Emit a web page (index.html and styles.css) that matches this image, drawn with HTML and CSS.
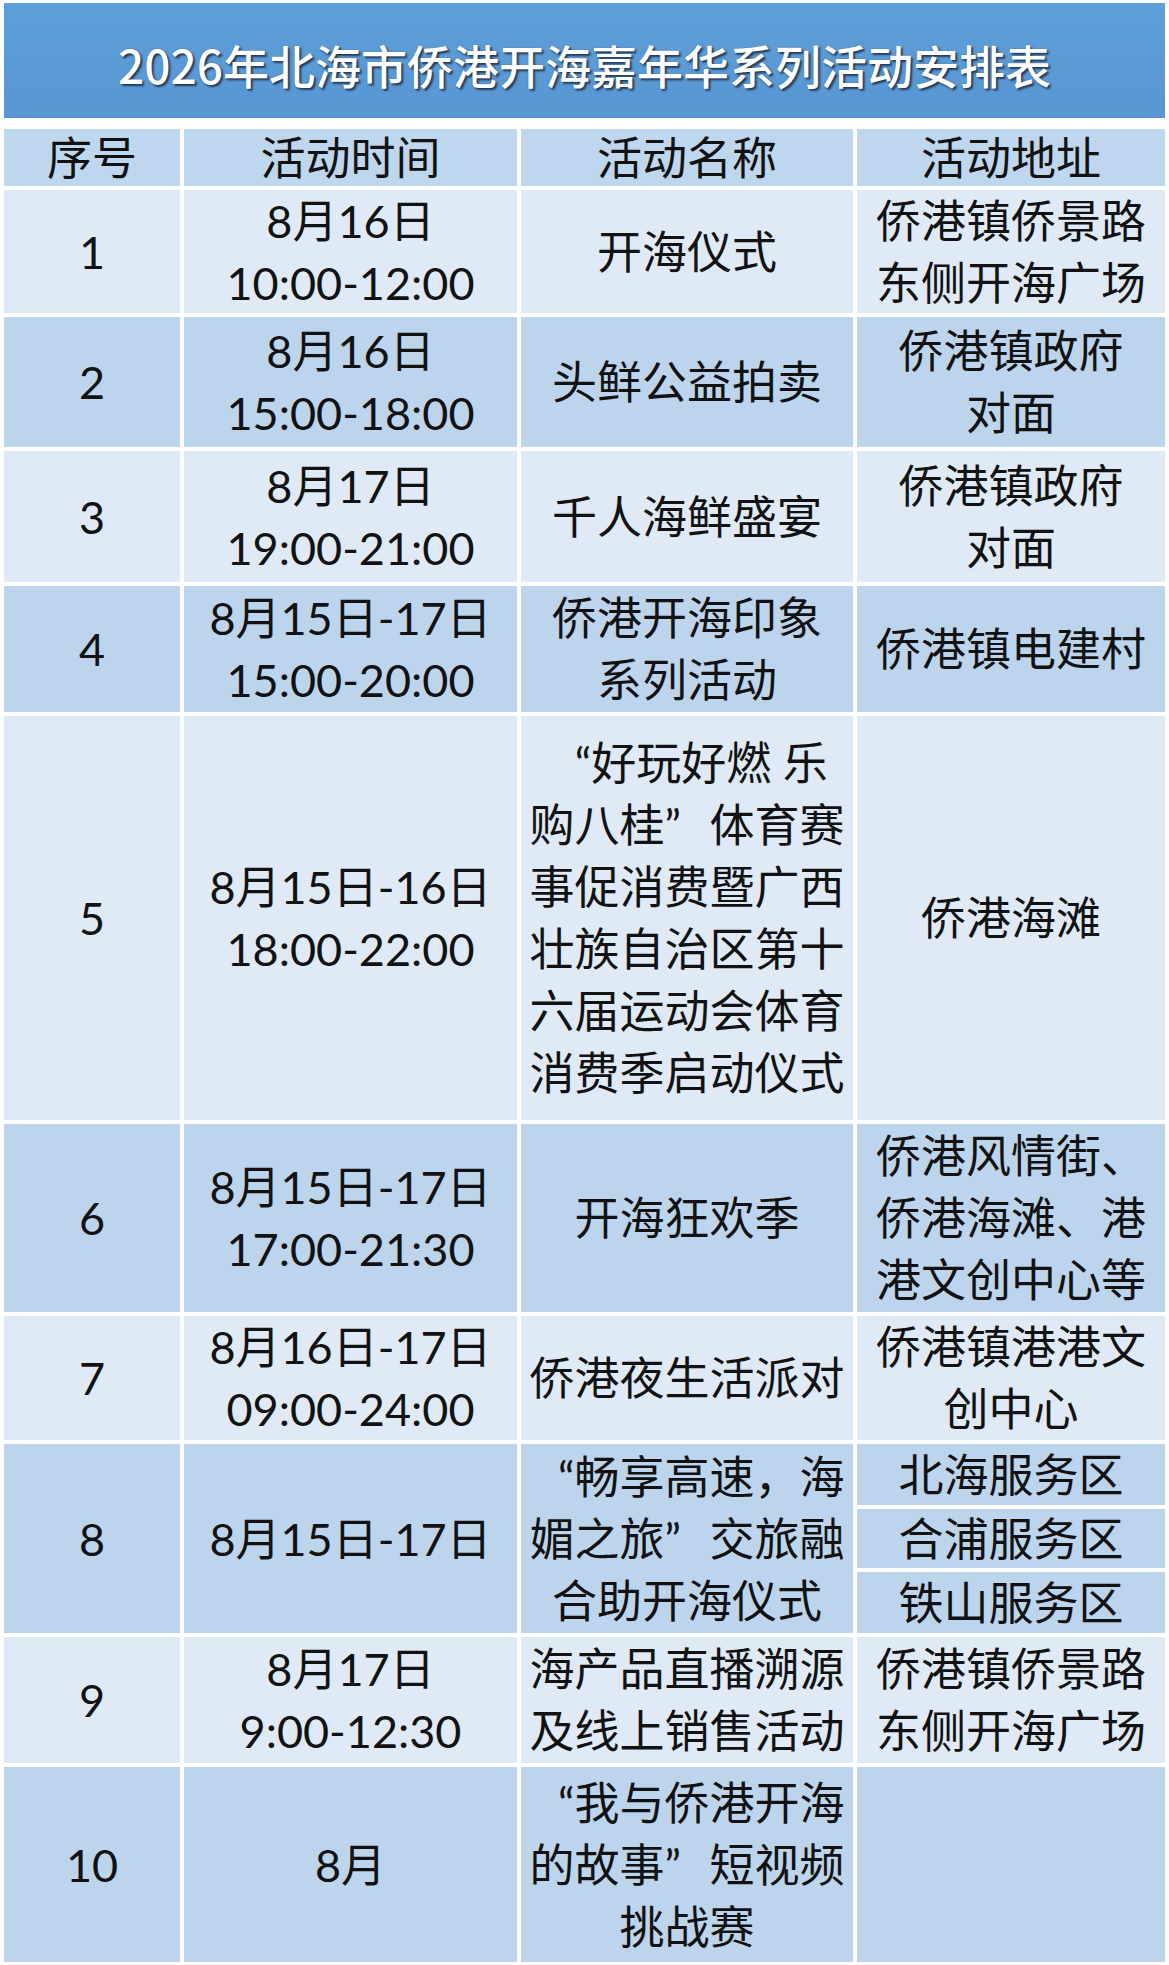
FILE: index.html
```html
<!DOCTYPE html>
<html lang="zh-CN">
<head>
<meta charset="utf-8">
<title>2026年北海市侨港开海嘉年华系列活动安排表</title>
<link rel="stylesheet" href="styles.css">
</head>
<body>
<div class="sheet">
  <div class="title">2026年北海市侨港开海嘉年华系列活动安排表</div>
  <div class="table">
    <div class="cell head">序号</div>
    <div class="cell head">活动时间</div>
    <div class="cell head">活动名称</div>
    <div class="cell head">活动地址</div>

    <div class="cell light">1</div>
    <div class="cell light">8月16日<br>10:00-12:00</div>
    <div class="cell light">开海仪式</div>
    <div class="cell light">侨港镇侨景路<br>东侧开海广场</div>

    <div class="cell dark">2</div>
    <div class="cell dark">8月16日<br>15:00-18:00</div>
    <div class="cell dark">头鲜公益拍卖</div>
    <div class="cell dark">侨港镇政府<br>对面</div>

    <div class="cell light">3</div>
    <div class="cell light">8月17日<br>19:00-21:00</div>
    <div class="cell light">千人海鲜盛宴</div>
    <div class="cell light">侨港镇政府<br>对面</div>

    <div class="cell dark">4</div>
    <div class="cell dark">8月15日-17日<br>15:00-20:00</div>
    <div class="cell dark">侨港开海印象<br>系列活动</div>
    <div class="cell dark">侨港镇电建村</div>

    <div class="cell light">5</div>
    <div class="cell light">8月15日-16日<br>18:00-22:00</div>
    <div class="cell light"><div class="txt"><span class="qo">“</span>好玩好燃 乐<br>购八桂<span class="qc">”</span>体育赛<br>事促消费暨广西<br>壮族自治区第十<br>六届运动会体育<br>消费季启动仪式</div></div>
    <div class="cell light">侨港海滩</div>

    <div class="cell dark">6</div>
    <div class="cell dark">8月15日-17日<br>17:00-21:30</div>
    <div class="cell dark">开海狂欢季</div>
    <div class="cell dark">侨港风情街、<br>侨港海滩、港<br>港文创中心等</div>

    <div class="cell light">7</div>
    <div class="cell light">8月16日-17日<br>09:00-24:00</div>
    <div class="cell light">侨港夜生活派对</div>
    <div class="cell light">侨港镇港港文<br>创中心</div>

    <div class="cell dark">8</div>
    <div class="cell dark">8月15日-17日</div>
    <div class="cell dark"><div class="txt"><span class="qo">“</span>畅享高速，海<br>媚之旅<span class="qc">”</span>交旅融<br>合助开海仪式</div></div>
    <div class="stack">
      <div class="cell dark">北海服务区</div>
      <div class="cell dark">合浦服务区</div>
      <div class="cell dark">铁山服务区</div>
    </div>

    <div class="cell light">9</div>
    <div class="cell light">8月17日<br>9:00-12:30</div>
    <div class="cell light">海产品直播溯源<br>及线上销售活动</div>
    <div class="cell light">侨港镇侨景路<br>东侧开海广场</div>

    <div class="cell dark">10</div>
    <div class="cell dark">8月</div>
    <div class="cell dark"><div class="txt"><span class="qo">“</span>我与侨港开海<br>的故事<span class="qc">”</span>短视频<br>挑战赛</div></div>
    <div class="cell dark"></div>
  </div>
</div>
</body>
</html>
```

FILE: styles.css
```css
html, body {
  margin: 0;
  padding: 0;
  background: #ffffff;
}

.sheet {
  width: 1161px;
  padding: 3px 4px 0 4px;
}

.title {
  height: 108px;
  padding-top: 7px;
  background: linear-gradient(#5f9fd9, #5796d2);
  color: #ffffff;
  font-family: "Noto Sans CJK SC", sans-serif;
  font-size: 46px;
  font-weight: 500;
  line-height: 1;
  display: flex;
  align-items: center;
  justify-content: center;
  text-shadow: 2px 2px 2px rgba(20, 30, 50, 0.75), 0 0 1px rgba(0, 0, 0, 0.5);
}

.table {
  margin-top: 11px;
  display: grid;
  grid-template-columns: 176px 333px 332px 308px;
  grid-template-rows: 57px 123px 130px 131px 126px 404px 188px 124px 189px 126px 195px;
  gap: 4px;
}

.cell {
  display: flex;
  align-items: center;
  justify-content: center;
  text-align: center;
  font-family: "Lato", "Noto Sans CJK SC", sans-serif;
  font-size: 45px;
  line-height: 62px;
  color: #121212;
  white-space: nowrap;
}

.txt {
  text-align: center;
}

.qo,
.qc {
  display: inline-block;
  width: 1em;
}

.qo {
  text-align: right;
}

.qc {
  text-align: left;
}

.head {
  background: #bed6ee;
}

.light {
  background: #dfeaf6;
}

.dark {
  background: #bcd5ed;
}

.stack {
  display: grid;
  grid-template-rows: 61px 59px 61px;
  gap: 4px;
}
```
